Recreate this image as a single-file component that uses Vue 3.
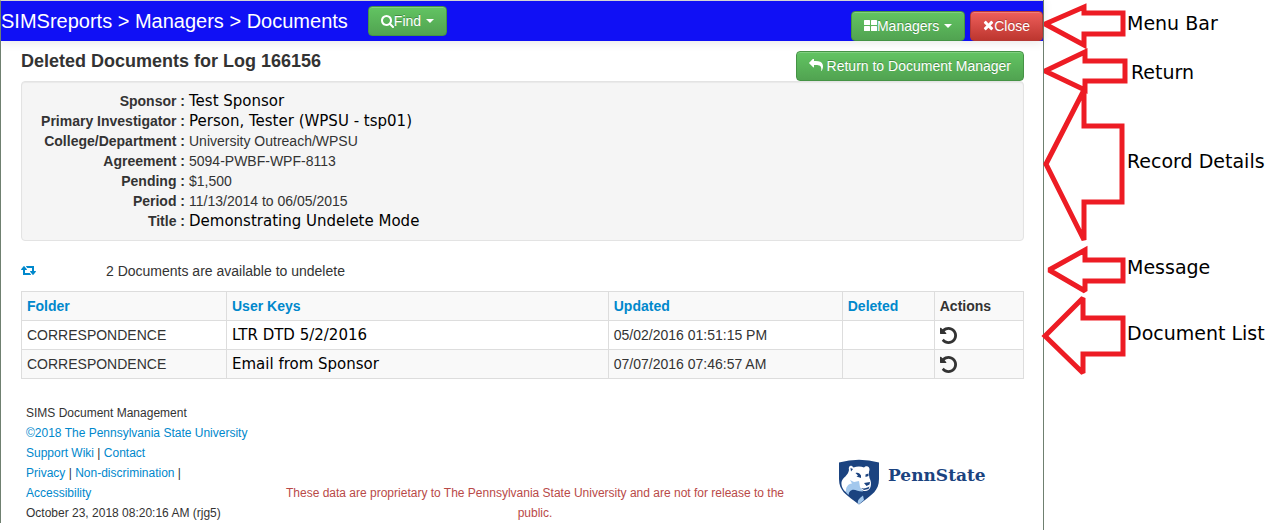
<script setup>
const details = [
  { label: 'Sponsor', value: 'Test Sponsor', edited: true },
  { label: 'Primary Investigator', value: 'Person, Tester (WPSU - tsp01)', edited: true },
  { label: 'College/Department', value: 'University Outreach/WPSU' },
  { label: 'Agreement', value: '5094-PWBF-WPF-8113' },
  { label: 'Pending', value: '$1,500' },
  { label: 'Period', value: '11/13/2014 to 06/05/2015' },
  { label: 'Title', value: 'Demonstrating Undelete Mode', edited: true },
]

const documents = [
  { folder: 'CORRESPONDENCE', keys: 'LTR DTD 5/2/2016', updated: '05/02/2016 01:51:15 PM', deleted: '' },
  { folder: 'CORRESPONDENCE', keys: 'Email from Sponsor', updated: '07/07/2016 07:46:57 AM', deleted: '' },
]

const arrows = [
  '1045,24 1084,7 1084,13 1123,13 1123,34 1084,34 1084,45',
  '1045,71 1085,52 1085,61 1125,61 1125,81 1085,81 1085,90',
  '1046,164 1084,90 1084,126 1122,126 1122,202 1084,202 1084,240',
  '1049,270 1085,250 1085,260 1123,260 1123,281 1085,281 1085,291',
  '1045,336 1083,298 1083,318 1123,318 1123,354 1083,354 1083,373',
]
</script>

<template>
  <div class="guide">
    <div class="app">
      <header class="menubar">
        <span class="brand">SIMSreports &gt; Managers &gt; Documents</span>
        <button class="btn find" type="button">
          <svg class="ico" width="13" height="13" viewBox="0 128 1664 1664" aria-hidden="true">
            <path fill="currentColor" d="M1152 832q0-185-131.5-316.5t-316.5-131.5-316.5 131.5-131.5 316.5 131.5 316.5 316.5 131.5 316.5-131.5 131.5-316.5zm512 832q0 52-38 90t-90 38q-54 0-90-38l-343-342q-179 124-399 124-143 0-273.5-55.5t-225-150-150-225-55.5-273.5 55.5-273.5 150-225 225-150 273.5-55.5 273.5 55.5 225 150 150 225 55.5 273.5q0 220-124 399l343 343q37 37 37 90z" />
          </svg>Find<span class="caret"></span>
        </button>
        <nav class="menu-right">
          <button class="btn" type="button">
            <svg class="ico" width="13" height="14" viewBox="0 0 13 14" aria-hidden="true" fill="currentColor">
              <rect x="0" y="1" width="6" height="5" rx="0.6" />
              <rect x="7" y="1" width="6" height="5" rx="0.6" />
              <rect x="0" y="7" width="6" height="5" rx="0.6" />
              <rect x="7" y="7" width="6" height="5" rx="0.6" />
            </svg>Managers<span class="caret"></span>
          </button>
          <button class="btn danger" type="button">
            <svg class="ico" width="11" height="14" viewBox="0 128 1408 1792" aria-hidden="true">
              <path fill="currentColor" d="M1298 1322q0 40-28 68l-136 136q-28 28-68 28t-68-28l-294-294-294 294q-28 28-68 28t-68-28l-136-136q-28-28-28-68t28-68l294-294-294-294q-28-28-28-68t28-68l136-136q28-28 68-28t68 28l294 294 294-294q28-28 68-28t68 28l136 136q28 28 28 68t-28 68l-294 294 294 294q28 28 28 68z" />
            </svg>Close
          </button>
        </nav>
      </header>

      <main class="content">
        <div class="heading">
          <h1>Deleted Documents for Log 166156</h1>
          <button class="btn" type="button">
            <svg class="ico gap" width="14" height="14" viewBox="0 128 1792 1792" aria-hidden="true">
              <path fill="currentColor" d="M1792 1120q0 166-127 451-3 7-10.5 24t-13.5 30-13 22q-12 17-28 17-15 0-23.5-10t-8.5-25q0-9 2.5-26.5t2.5-23.5q5-68 5-123 0-101-17.5-181t-48.5-138.5-80-101-105.5-69.5-133-42.5-154-21.5-175.5-6h-224v256q0 26-19 45t-45 19-45-19l-512-512q-19-19-19-45t19-45l512-512q19-19 45-19t45 19 19 45v256h224q713 0 875 403 53 134 53 333z" />
            </svg>Return to Document Manager
          </button>
        </div>

        <dl class="well">
          <template v-for="d in details" :key="d.label">
            <dt>{{ d.label }} :</dt>
            <dd :class="{ edited: d.edited }">{{ d.value }}</dd>
          </template>
        </dl>

        <div class="message">
          <a href="#" aria-label="Refresh">
            <svg width="15" height="14" viewBox="0 128 1920 1792" aria-hidden="true">
              <path fill="currentColor" d="M1280 1504q0 13-9.500 22.500t-22.500 9.500h-960q-8 0-13.500-2t-9-7-5.500-8-3-11.500-1-11.500v-600h-192q-26 0-45-19t-19-45q0-24 15-41l320-384q19-22 49-22t49 22l320 384q15 17 15 41 0 26-19 45t-45 19h-192v384h576q16 0 25 11l160 192q7 10 7 21zm640-416q0 24-15 41l-320 384q-20 23-49 23t-49-23l-320-384q-15-17-15-41 0-26 19-45t45-19h192v-384h-576q-16 0-25-12l-160-192q-7-9-7-20 0-13 9.500-22.500t22.500-9.500h960q8 0 13.500 2t9 7 5.500 8 3 11.500 1 11.500v600h192q26 0 45 19t19 45z" />
            </svg>
          </a>
          <span>2 Documents are available to undelete</span>
        </div>

        <table>
          <colgroup>
            <col class="c-folder" /><col class="c-keys" /><col class="c-updated" /><col class="c-deleted" /><col />
          </colgroup>
          <thead>
            <tr>
              <th><a href="#">Folder</a></th>
              <th><a href="#">User Keys</a></th>
              <th><a href="#">Updated</a></th>
              <th><a href="#">Deleted</a></th>
              <th>Actions</th>
            </tr>
          </thead>
          <tbody>
            <tr v-for="doc in documents" :key="doc.updated">
              <td>{{ doc.folder }}</td>
              <td class="keys">{{ doc.keys }}</td>
              <td>{{ doc.updated }}</td>
              <td>{{ doc.deleted }}</td>
              <td>
                <button class="undo" type="button" aria-label="Undelete">
                  <svg width="17" height="17" viewBox="0 128 1536 1536" aria-hidden="true">
                    <path fill="currentColor" d="M1536 896q0 156-61 298t-164 245-245 164-298 61q-172 0-327-72.500t-264-204.500q-7-10-6.500-22.500t8.500-20.500l137-138q10-9 25-9 16 2 23 12 73 95 179 147t225 52q104 0 198.500-40.500t163.500-109.500 109.500-163.500 40.500-198.500-40.500-198.500-109.500-163.500-163.500-109.500-198.500-40.500q-98 0-188 35.500t-160 101.500l137 138q31 30 14 69-17 40-59 40h-448q-26 0-45-19t-19-45v-448q0-42 40-59 39-17 69 14l130 129q107-101 244.500-156.500t284.500-55.500q156 0 298 61t245 164 164 245 61 298z" />
                  </svg>
                </button>
              </td>
            </tr>
          </tbody>
        </table>

        <footer>
          <div class="legal">
            <span>SIMS Document Management</span>
            <span><a href="#">©2018 The Pennsylvania State University</a></span>
            <span><a href="#">Support Wiki</a> | <a href="#">Contact</a></span>
            <span><a href="#">Privacy</a> | <a href="#">Non-discrimination</a> |</span>
            <span><a href="#">Accessibility</a></span>
            <span>October 23, 2018 08:20:16 AM (rjg5)</span>
          </div>
          <p class="notice">These data are proprietary to The Pennsylvania State University and are not for release to the public.</p>
          <div class="logo">
            <svg width="42" height="46" viewBox="0 0 42 46" aria-hidden="true">
              <path fill="#1b4380" d="M1 3.500 Q21 -2 41 3.500 V20 C41 32 33 36 27 41 L21 45.500 L15 41 C9 36 1 32 1 20 Z" />
              <path fill="#fff" d="M11 11 C10 7 13 5 15.500 8.500 C19 7 23 7 26 8.500 C28 6 32 7 31.500 11 C30.500 13 31 16 31.500 19 C33 22 33.500 25 32.500 28 C31.500 31 29 32.500 26 32 C23.500 31.500 22 30 20.500 28 L15 26 C11 26 9 29 8 33 C5 31 3 27 3.500 23 C5 18 10 17 11 11 Z" />
              <path fill="#a3c8ed" d="M8 33.500 C7.500 28 10 25 14 24.500 L12 21 L16 23 L21 22 L22 28 L25 32.500 C21 33 17 30 14 31 C11 32 11 34.500 10.500 36 Z M20 44.500 C19 41 22 39 25 36.500 L26 41 L21 45.300 Z" />
              <path fill="#1b4380" d="M12.500 9 L15 10 L13 12.500 Z M17.500 14 C20 13 22 14.500 23 16.500 L23 19 L18.500 17.500 L20 16.500 Z M30.500 14.500 L27.500 15.500 L27.500 18 L30.500 17 Z M26 24 L32 23 L31.500 25.500 L28.500 27 Z M23 29 C26 30 29 29 31.500 27.500 L30.500 30 L26 31 Z" />
            </svg>
            <span>PennState</span>
          </div>
        </footer>
      </main>
    </div>

    <aside class="callouts">
      <svg class="arrows" width="90" height="380" viewBox="1040 0 90 380" aria-hidden="true">
        <polygon v-for="a in arrows" :key="a" :points="a" />
      </svg>
      <span>Menu Bar</span>
      <span class="shift">Return</span>
      <span>Record Details</span>
      <span>Message</span>
      <span>Document List</span>
    </aside>
  </div>
</template>

<style>
body {
  background: #fff;
}
</style>

<style scoped>
.guide {
  display: flex;
  color: #333;
  font: 14px/20px "Liberation Sans", Arial, sans-serif;
}
.app {
  flex: 1;
  min-width: 0;
  min-height: 100vh;
  box-sizing: border-box;
  border-right: 1px solid #6f8070;
}
a {
  color: #0088cc;
  text-decoration: none;
}
.menubar {
  display: flex;
  height: 40px;
  border-top: 1px solid #d4d4d4;
  border-left: 1px solid #6f8070;
  background: #1010f5;
  box-shadow: 0 1px 10px rgba(0, 0, 0, 0.1);
}
.brand {
  color: #fff;
  font-size: 20px;
  line-height: 40px;
  white-space: nowrap;
}
.btn {
  display: flex;
  align-items: center;
  height: 30px;
  box-sizing: border-box;
  padding: 0 12px;
  border: 1px solid #459345;
  border-radius: 4px;
  background: linear-gradient(#62c462, #51a351);
  box-shadow: inset 0 1px 0 rgba(255, 255, 255, 0.2);
  color: #fff;
  font: inherit;
  text-shadow: 0 -1px 0 rgba(0, 0, 0, 0.25);
  white-space: nowrap;
}
.find {
  margin: 5px 0 0 20px;
}
.danger {
  border-color: #b53a35;
  background: linear-gradient(#ee5f5b, #bd362f);
}
.ico {
  flex: none;
}
.gap {
  margin-right: 4px;
}
.caret {
  margin-left: 5px;
  border: 4px solid transparent;
  border-top-color: #fff;
  border-bottom: 0;
}
.menu-right {
  display: flex;
  gap: 5px;
  margin: 10px 0 0 auto;
}
.content {
  padding: 10px 19px 0 20px;
  border-left: 1px solid #6f8070;
}
.heading {
  display: flex;
  justify-content: space-between;
}
h1 {
  margin: 0;
  font-size: 18px;
  line-height: 20px;
}
.well {
  display: grid;
  grid-template-columns: 163px 1fr;
  grid-auto-rows: 20px;
  column-gap: 4px;
  margin: 0;
  padding: 9px 0;
  border: 1px solid #e3e3e3;
  border-radius: 4px;
  background: #f5f5f5;
  box-shadow: inset 0 1px 1px rgba(0, 0, 0, 0.05);
}
dt {
  font-weight: bold;
  text-align: right;
}
dd {
  margin: 0;
}
.edited,
.keys {
  color: #000;
  font-family: "DejaVu Sans", Verdana, sans-serif;
  font-size: 15px;
}
.message {
  display: flex;
  align-items: center;
  gap: 70px;
  margin: 20px 0 10px;
}
.message a {
  display: flex;
}
table {
  width: 100%;
  table-layout: fixed;
  border-collapse: collapse;
}
.c-folder {
  width: 205px;
}
.c-keys {
  width: 38.1%;
}
.c-updated {
  width: 234px;
}
.c-deleted {
  width: 92px;
}
th,
td {
  height: 20px;
  padding: 4px 5px;
  border: 1px solid #ddd;
  text-align: left;
}
tr:nth-child(odd) th,
tr:nth-child(even) td {
  background: #f9f9f9;
}
.undo {
  display: flex;
  padding: 0;
  border: 0;
  background: none;
  color: #333;
}
footer {
  display: flex;
  align-items: flex-end;
  padding: 24px 0 0 5px;
  font-size: 12px;
}
.legal {
  display: flex;
  flex-direction: column;
  width: 234px;
}
.notice {
  flex: 1;
  margin: 0;
  padding: 0 48px 0 20px;
  color: #b94a48;
  text-align: center;
}
.logo {
  display: flex;
  gap: 8px;
  width: 186px;
  margin-bottom: 18px;
  color: #1b4380;
  font: bold 17px/32px "DejaVu Serif", serif;
}
.callouts {
  position: relative;
  display: grid;
  grid-template-rows: 46px 52px 126px 86px 46px;
  align-items: center;
  align-content: start;
  width: 236px;
  box-sizing: border-box;
  padding-left: 83px;
  color: #000;
  font: 19px/24px "DejaVu Sans", Verdana, sans-serif;
  white-space: nowrap;
}
.shift {
  padding-left: 4px;
}
.arrows {
  position: absolute;
  top: 0;
  left: -4px;
}
.arrows polygon {
  fill: none;
  stroke: #ed1c24;
  stroke-width: 5;
  stroke-linejoin: miter;
  stroke-miterlimit: 2;
}
</style>
